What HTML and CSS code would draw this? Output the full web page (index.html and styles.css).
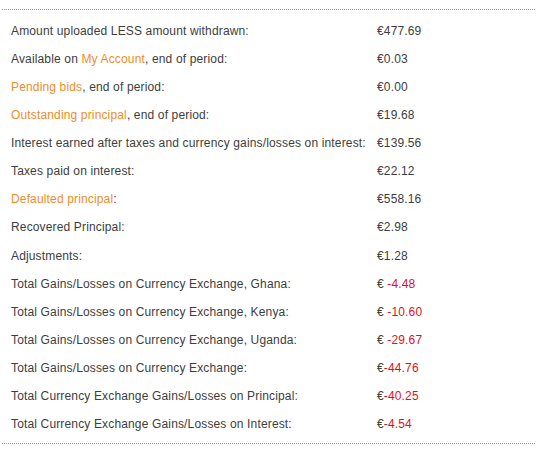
FILE: index.html
```html
<!DOCTYPE html>
<html>
<head>
<meta charset="utf-8">
<link rel="stylesheet" href="styles.css">
</head>
<body>
<div class="summary">
  <div class="row"><span class="label">Amount uploaded LESS amount withdrawn:</span><span class="value">€477.69</span></div>
  <div class="row"><span class="label">Available on <a class="link">My Account</a>, end of period:</span><span class="value">€0.03</span></div>
  <div class="row"><span class="label"><a class="link">Pending bids</a>, end of period:</span><span class="value">€0.00</span></div>
  <div class="row"><span class="label"><a class="link">Outstanding principal</a>, end of period:</span><span class="value">€19.68</span></div>
  <div class="row"><span class="label">Interest earned after taxes and currency gains/losses on interest:</span><span class="value">€139.56</span></div>
  <div class="row"><span class="label">Taxes paid on interest:</span><span class="value">€22.12</span></div>
  <div class="row"><span class="label"><a class="link">Defaulted principal</a>:</span><span class="value">€558.16</span></div>
  <div class="row"><span class="label">Recovered Principal:</span><span class="value">€2.98</span></div>
  <div class="row"><span class="label">Adjustments:</span><span class="value">€1.28</span></div>
  <div class="row"><span class="label">Total Gains/Losses on Currency Exchange, Ghana:</span><span class="value">€ <span class="neg">-4.48</span></span></div>
  <div class="row"><span class="label">Total Gains/Losses on Currency Exchange, Kenya:</span><span class="value">€ <span class="neg">-10.60</span></span></div>
  <div class="row"><span class="label">Total Gains/Losses on Currency Exchange, Uganda:</span><span class="value">€ <span class="neg">-29.67</span></span></div>
  <div class="row"><span class="label">Total Gains/Losses on Currency Exchange:</span><span class="value">€<span class="neg">-44.76</span></span></div>
  <div class="row"><span class="label">Total Currency Exchange Gains/Losses on Principal:</span><span class="value">€<span class="neg">-40.25</span></span></div>
  <div class="row"><span class="label">Total Currency Exchange Gains/Losses on Interest:</span><span class="value">€<span class="neg">-4.54</span></span></div>
</div>
</body>
</html>
```
FILE: styles.css
```css
html, body {
  margin: 0;
  padding: 0;
  background: #ffffff;
}
body {
  font-family: "Liberation Sans", Arial, sans-serif;
  font-size: 12px;
  letter-spacing: 0.15px;
  color: #3d3d3d;
}
.summary {
  margin: 9px 5px 0 2px;
  border-top: 1px dotted #9a9a9a;
  border-bottom: 1px dotted #9a9a9a;
  padding: 7px 0 5px 9px;
  display: flex;
  flex-direction: column;
}
.row {
  display: grid;
  grid-template-columns: 366px auto;
  height: 28.07px;
  align-items: center;
}
.link {
  color: #ee8d27;
  text-decoration: none;
}
.neg {
  color: #e0111c;
}
```
